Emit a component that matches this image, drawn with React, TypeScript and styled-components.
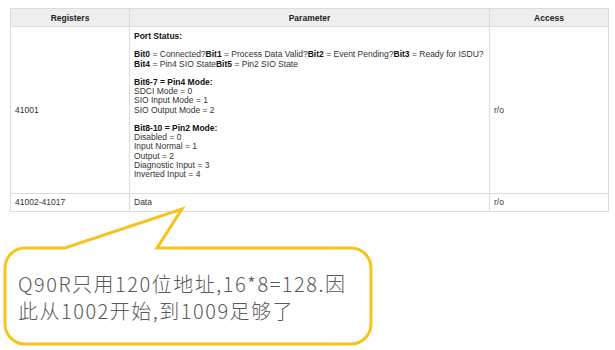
import React from "react";
import styled, { createGlobalStyle } from "styled-components";

const GlobalStyle = createGlobalStyle`
  html, body { margin: 0; padding: 0; background: #ffffff; }
  body { font-family: "Liberation Sans", Arial, sans-serif; }
`;

const Page = styled.div`
  width: 615px;
  height: 350px;
  overflow: hidden;
  display: flex;
  flex-direction: column;
  align-items: flex-start;
`;

const Table = styled.table`
  margin: 8px 0 0 10px;
  width: 598px;
  border-collapse: collapse;
  table-layout: fixed;
  font-family: "Liberation Sans", Arial, sans-serif;
  font-size: 8.5px;
  color: #333;
`;

const HeadCell = styled.th`
  background: #eeeeee;
  border: 1px solid #dcdcdc;
  height: 17px;
  padding: 0 4px;
  font-weight: bold;
  text-align: center;
  color: #222;
`;

const Cell = styled.td<{ $top?: boolean; $padBottom?: number }>`
  border: 1px solid #dcdcdc;
  padding: ${(p) => (p.$top ? `5px 4px ${p.$padBottom ?? 0}px 4px` : "0 4px")};
  vertical-align: ${(p) => (p.$top ? "top" : "middle")};
  height: 17px;
  line-height: 9.2px;
`;

const Para = styled.div`
  margin-bottom: 9.2px;
  line-height: 9.2px;
  &:last-child { margin-bottom: 0; }
`;

const B = styled.b`
  color: #111;
`;

const Callout = styled.div`
  position: relative;
  margin: 36px 0 0 5px;
  width: 366px;
  height: 96px;
  box-sizing: border-box;
  padding: 22px 8px 0 13px;
`;

const CalloutShape = styled.svg`
  position: absolute;
  left: -2px;
  top: -41px;
  width: 370px;
  height: 139px;
  overflow: visible;
  z-index: 0;
`;

const CalloutText = styled.div`
  position: relative;
  z-index: 1;
  font-family: "Noto Sans CJK SC", "Noto Sans", sans-serif;
  font-size: 20px;
  font-weight: 300;
  line-height: 27px;
  color: #5a5a5a;
  letter-spacing: 1.5px;
  white-space: nowrap;
`;

export default function App() {
  return (
    <Page>
      <GlobalStyle />
      <Table>
        <colgroup>
          <col style={{ width: 119 }} />
          <col style={{ width: 360 }} />
          <col style={{ width: 119 }} />
        </colgroup>
        <thead>
          <tr>
            <HeadCell>Registers</HeadCell>
            <HeadCell>Parameter</HeadCell>
            <HeadCell>Access</HeadCell>
          </tr>
        </thead>
        <tbody>
          <tr>
            <Cell>41001</Cell>
            <Cell $top $padBottom={14}>
              <Para>
                <B>Port Status:</B>
              </Para>
              <Para>
                <B>Bit0</B> = Connected?<B>Bit1</B> = Process Data Valid?<B>Bit2</B> = Event Pending?<B>Bit3</B> = Ready for ISDU?
                <br />
                <B>Bit4</B> = Pin4 SIO State<B>Bit5</B> = Pin2 SIO State
              </Para>
              <Para>
                <B>Bit6-7 = Pin4 Mode:</B>
                <br />
                SDCI Mode = 0
                <br />
                SIO Input Mode = 1
                <br />
                SIO Output Mode = 2
              </Para>
              <Para>
                <B>Bit8-10 = Pin2 Mode:</B>
                <br />
                Disabled = 0
                <br />
                Input Normal = 1
                <br />
                Output = 2
                <br />
                Diagnostic Input = 3
                <br />
                Inverted Input = 4
              </Para>
            </Cell>
            <Cell>r/o</Cell>
          </tr>
          <tr>
            <Cell>41002-41017</Cell>
            <Cell>Data</Cell>
            <Cell>r/o</Cell>
          </tr>
        </tbody>
      </Table>
      <Callout>
        <CalloutShape viewBox="0 0 370 139">
          <path
            d="M 22 41 H 62 L 179 2 L 154 41 H 348 A 20 20 0 0 1 368 61 V 117 A 20 20 0 0 1 348 137 H 22 A 20 20 0 0 1 2 117 V 61 A 20 20 0 0 1 22 41 Z"
            fill="#ffffff"
            stroke="#f7c41c"
            strokeWidth={3}
            strokeLinejoin="miter"
          />
        </CalloutShape>
        <CalloutText>
          Q90R只用120位地址,16*8=128.因
          <br />
          此从1002开始,到1009足够了
        </CalloutText>
      </Callout>
    </Page>
  );
}
